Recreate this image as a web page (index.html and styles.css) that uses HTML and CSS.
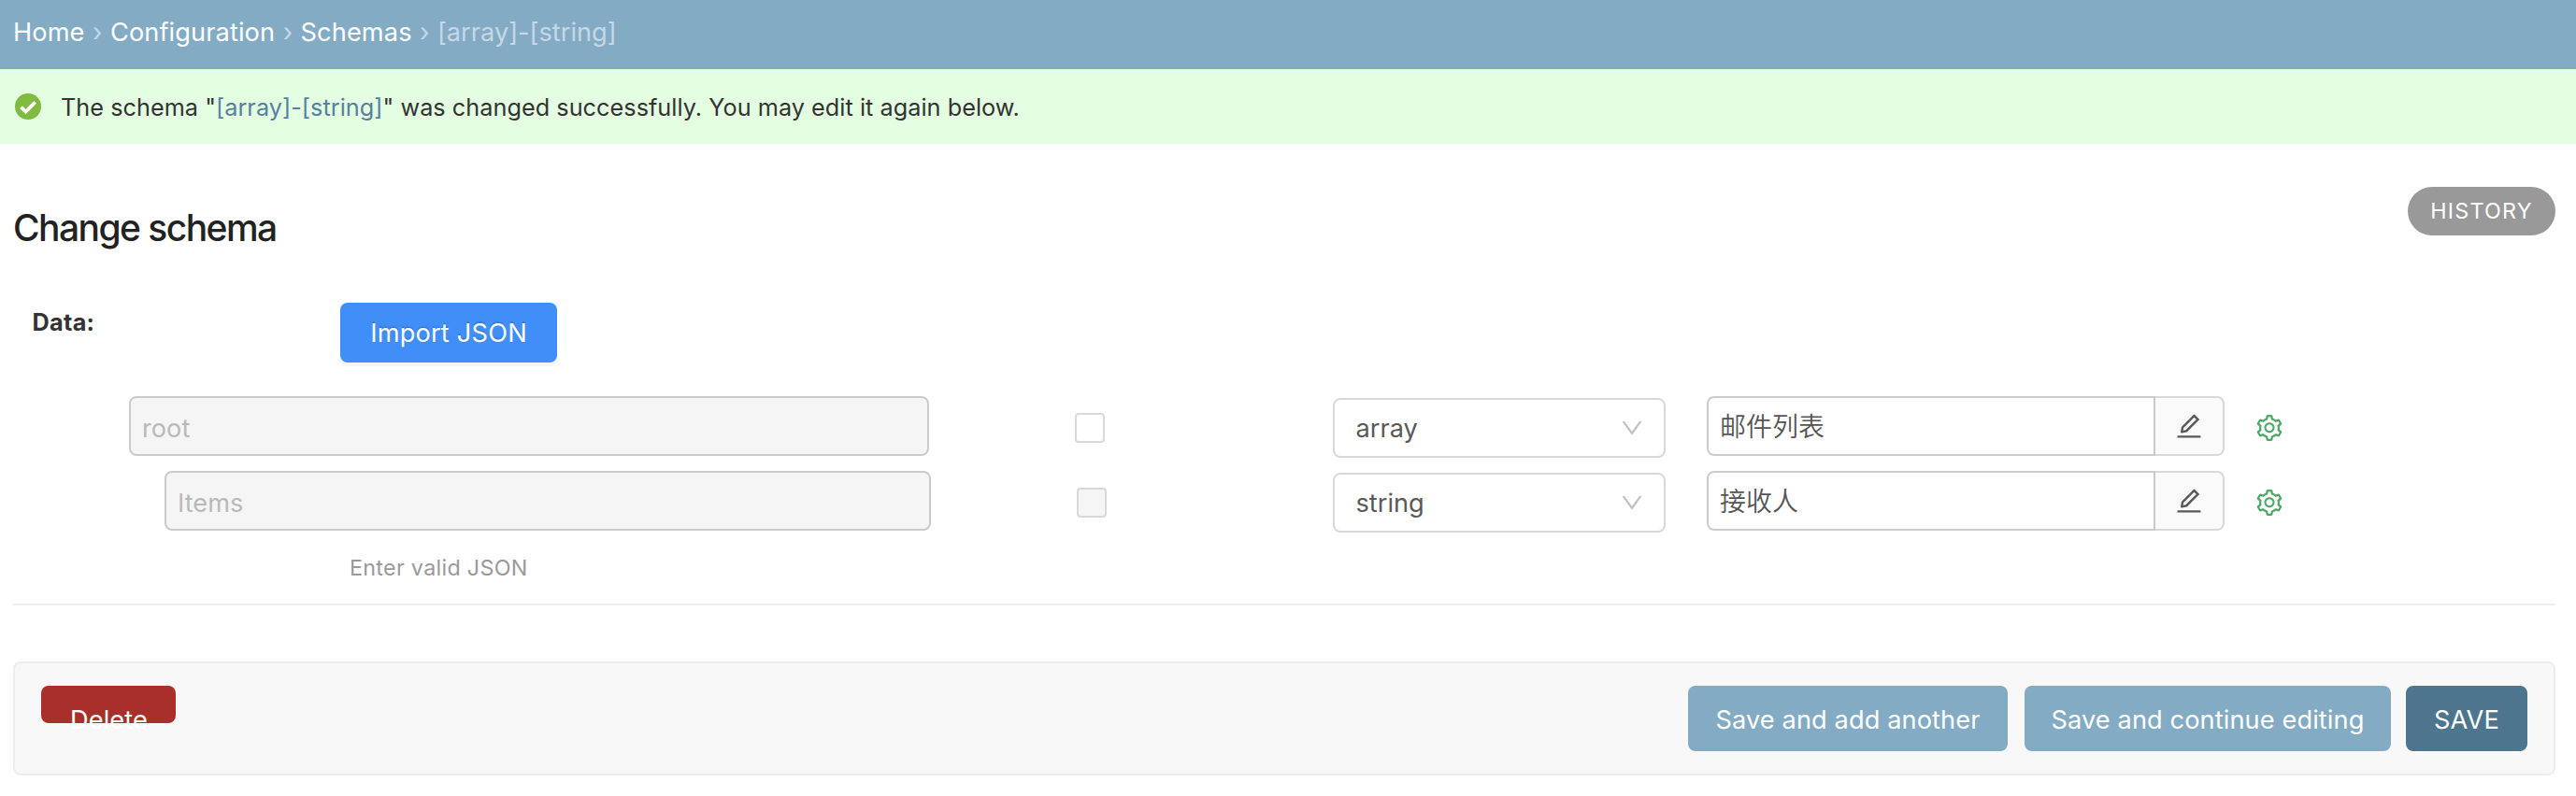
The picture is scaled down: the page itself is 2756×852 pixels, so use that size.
FILE: index.html
```html
<!DOCTYPE html>
<html lang="en">
<head>
<meta charset="utf-8">
<title>Change schema</title>
<link rel="stylesheet" href="styles.css">
</head>
<body>
<svg class="sprite" width="0" height="0">
  <symbol id="down" viewBox="0 0 1024 1024"><path d="M884 256h-75c-5.1 0-9.9 2.5-12.9 6.6L512 654.2 227.9 262.6c-3-4.1-7.8-6.6-12.9-6.6h-75c-6.5 0-10.3 7.4-6.5 12.7l352.6 486.1c12.8 17.6 39 17.6 51.7 0l352.6-486.1c3.9-5.3.1-12.7-6.4-12.7z"/></symbol>
  <symbol id="edit" viewBox="0 0 1024 1024"><path d="M257.7 752c2 0 4-.2 6-.5L431.9 722c2-.4 3.9-1.3 5.3-2.8l423.9-423.9a9.96 9.96 0 0 0 0-14.1L694.9 114.9c-1.9-1.9-4.4-2.9-7.1-2.9s-5.2 1-7.1 2.9L256.8 538.8c-1.5 1.5-2.4 3.3-2.8 5.3l-29.5 168.2a33.5 33.5 0 0 0 9.4 29.8c6.6 6.4 14.9 9.9 23.8 9.9zm67.4-174.4L687.8 215l73.3 73.3-362.7 362.6-88.9 15.7 15.6-89zM880 836H144c-17.7 0-32 14.3-32 32v36c0 4.4 3.6 8 8 8h784c4.4 0 8-3.6 8-8v-36c0-17.7-14.3-32-32-32z"/></symbol>
  <symbol id="setting" viewBox="0 0 1024 1024"><path d="M924.8 625.7l-65.5-56c3.1-19 4.7-38.4 4.7-57.8s-1.6-38.8-4.7-57.8l65.5-56a32.03 32.03 0 0 0 9.3-35.2l-.9-2.6a443.74 443.74 0 0 0-79.7-137.9l-1.8-2.1a32.12 32.12 0 0 0-35.1-9.5l-81.3 28.9c-30-24.6-63.5-44-99.7-57.6l-15.7-85a32.05 32.05 0 0 0-25.8-25.7l-2.7-.5c-52.1-9.4-106.9-9.4-159 0l-2.7.5a32.05 32.05 0 0 0-25.8 25.7l-15.8 85.4a351.86 351.86 0 0 0-99 57.4l-81.9-29.1a32 32 0 0 0-35.1 9.5l-1.8 2.1a446.02 446.02 0 0 0-79.7 137.9l-.9 2.6c-4.5 12.5-.8 26.5 9.3 35.2l66.3 56.6c-3.1 18.8-4.6 38-4.6 57.1 0 19.2 1.5 38.4 4.6 57.1L99 625.5a32.03 32.03 0 0 0-9.3 35.2l.9 2.6c18.1 50.4 44.9 96.9 79.7 137.9l1.8 2.1a32.12 32.12 0 0 0 35.1 9.5l81.9-29.1c29.8 24.5 63.1 43.9 99 57.4l15.8 85.4a32.05 32.05 0 0 0 25.8 25.7l2.7.5a449.4 449.4 0 0 0 159 0l2.7-.5a32.05 32.05 0 0 0 25.8-25.7l15.7-85a350 350 0 0 0 99.7-57.6l81.3 28.9a32 32 0 0 0 35.1-9.5l1.8-2.1c34.8-41.1 61.6-87.5 79.7-137.9l.9-2.6c4.5-12.3.8-26.3-9.3-35zM788.3 465.9c2.5 15.1 3.8 30.6 3.8 46.1s-1.3 31-3.8 46.1l-6.6 40.1 74.7 63.9a370.03 370.03 0 0 1-42.6 73.6L721 702.8l-31.4 25.8c-23.9 19.6-50.5 35-79.3 45.8l-38.1 14.3-17.9 97a377.5 377.5 0 0 1-85 0l-17.9-97.2-37.8-14.5c-28.5-10.8-55-26.2-78.7-45.7l-31.4-25.9-93.4 33.2c-17-22.9-31.2-47.6-42.6-73.6l75.5-64.5-6.5-40c-2.4-14.9-3.7-30.3-3.7-45.5 0-15.3 1.2-30.6 3.7-45.5l6.5-40-75.5-64.5c11.3-26.1 25.6-50.7 42.6-73.6l93.4 33.2 31.4-25.9c23.7-19.5 50.2-34.9 78.7-45.7l37.9-14.3 17.9-97.2c28.1-3.2 56.8-3.2 85 0l17.9 97 38.1 14.3c28.7 10.8 55.4 26.2 79.3 45.8l31.4 25.8 92.8-32.9c17 22.9 31.2 47.6 42.6 73.6L781.8 426l6.5 39.9zM512 326c-97.2 0-176 78.8-176 176s78.8 176 176 176 176-78.8 176-176-78.8-176-176-176zm79.2 255.2A111.6 111.6 0 0 1 512 614c-29.9 0-58-11.7-79.2-32.8A111.6 111.6 0 0 1 400 502c0-29.9 11.7-58 32.8-79.2C454 401.6 482.1 390 512 390c29.9 0 58 11.6 79.2 32.8A111.6 111.6 0 0 1 624 502c0 29.9-11.7 58-32.8 79.2z"/></symbol>
</svg>
<nav class="breadcrumbs"><a>Home</a> › <a>Configuration</a> › <a>Schemas</a> › <span>[array]-[string]</span></nav>
<div class="message">
  <svg class="check" viewBox="0 0 28 28"><circle cx="14" cy="14" r="14"/><path d="M6.5 14.7l5 4.9L21.6 9.4"/></svg>
  <span class="message-text">The schema "<a>[array]-[string]</a>" was changed successfully. You may edit it again below.</span>
</div>
<main class="content">
  <div class="title-row">
    <h1>Change schema</h1>
    <a class="history">HISTORY</a>
  </div>
  <section class="data">
    <div class="data-head">
      <label class="label">Data:</label>
      <button class="import">Import JSON</button>
    </div>
    <div class="row">
      <div class="field">root</div>
      <span class="checkbox"></span>
      <div class="select"><span>array</span><svg class="i-down"><use href="#down"/></svg></div>
      <div class="group"><div class="value">邮件列表</div><div class="addon"><svg class="i-edit"><use href="#edit"/></svg></div></div>
      <svg class="i-set"><use href="#setting"/></svg>
    </div>
    <div class="row child">
      <div class="field">Items</div>
      <span class="checkbox disabled"></span>
      <div class="select"><span>string</span><svg class="i-down"><use href="#down"/></svg></div>
      <div class="group"><div class="value">接收人</div><div class="addon"><svg class="i-edit"><use href="#edit"/></svg></div></div>
      <svg class="i-set"><use href="#setting"/></svg>
    </div>
    <p class="help">Enter valid JSON</p>
  </section>
  <div class="submit-row">
    <a class="delete">Delete</a>
    <button class="btn another">Save and add another</button>
    <button class="btn continue">Save and continue editing</button>
    <button class="btn save">SAVE</button>
  </div>
</main>
</body>
</html>
```
FILE: styles.css
```css
* { box-sizing: border-box; }
body { margin: 0; background: #fff; color: #333; font-family: Inter, "Noto Sans CJK SC", sans-serif; font-size: 27.2px; }
button { border: 0; padding: 0; font: inherit; color: #fff; letter-spacing: inherit; }
.sprite { display: block; }
.breadcrumbs { height: 74px; padding: 18px 14px 0; line-height: 34px; background: #84abc4; color: #c4d8e5; white-space: nowrap; word-spacing: .8px; }
.breadcrumbs a { color: #fff; letter-spacing: .1px; }
.message { display: flex; align-items: center; height: 80px; padding: 0 16px; background: #e3fee0; font-size: 25.25px; }
.message a { color: #5780a0; }
.message-text { margin-left: 21px; padding-top: 2px; white-space: nowrap; letter-spacing: .03px; }
.check { width: 28px; height: 28px; fill: #7fba41; }
.check path { fill: none; stroke: #fff; stroke-width: 3.8; }
.content { padding: 46px 22px 0 14px; }
.title-row { display: flex; justify-content: space-between; height: 124px; }
h1 { margin: 19px 0 0; font-size: 39px; line-height: 50px; font-weight: 500; color: #222; letter-spacing: -1.55px; }
.history { width: 158px; height: 52px; line-height: 52px; border-radius: 26px; background: #999; color: #fff; font-size: 23.3px; text-align: center; letter-spacing: 1.2px; }
.data { height: 324px; border-bottom: 2px solid #eee; }
.data-head { display: flex; height: 100px; }
.label { width: 350px; padding: 5px 0 0 20.5px; font-size: 25.25px; line-height: 32px; font-weight: 700; letter-spacing: .3px; }
.import { width: 232px; height: 64px; padding-top: 1px; border-radius: 8px; background: #408ef7; box-shadow: 0 4px 0 #f5f5f5; text-shadow: 0 -2px 0 rgba(0, 0, 0, .12); letter-spacing: .2px; }
.row { display: flex; height: 64px; margin: 0 0 16px 124px; }
.row.child { margin-left: 162px; }
.field { width: 856px; border: 2px solid #cbcbcb; border-radius: 8px; background: #f5f5f5; color: #b9b9b9; padding: 3px 0 0 12px; line-height: 60px; }
.child .field { width: 820px; }
.checkbox { width: 32px; height: 32px; margin: 18px 244px 0 156px; border: 2px solid #d9d9d9; border-radius: 4px; }
.checkbox.disabled { margin-right: 242px; background: #f5f5f5; }
.select { display: flex; justify-content: space-between; align-items: center; width: 356px; height: 64px; margin: 2px 44px 0 0; padding: 0 20px 0 22.5px; border: 2px solid #d9d9d9; border-radius: 8px; color: #595959; }
.i-down { width: 28px; height: 28px; fill: #bfbfbf; }
.group { display: flex; width: 554px; }
.value { width: 480px; border: 2px solid #cbcbcb; border-radius: 8px 0 0 8px; padding-left: 12px; line-height: 58px; color: #555; font-family: "Noto Sans CJK SC", sans-serif; font-size: 28px; font-weight: 350; }
.addon { width: 74px; border: 2px solid #d9d9d9; border-left: 0; border-radius: 0 8px 8px 0; background: #fafafa; padding: 13.5px 0 0 20px; }
.i-edit { display: block; width: 32px; height: 32px; fill: #595959; }
.i-set { width: 32px; height: 32px; margin: 18px 0 0 32px; fill: #4aa864; }
.help { margin: 25px 0 0 360px; font-size: 23.3px; line-height: 30px; color: #999; letter-spacing: .3px; }
.submit-row { display: flex; height: 122px; margin-top: 60px; padding: 24px 28px; border: 2px solid #ededed; border-radius: 8px; background: #f8f8f8; line-height: 74px; letter-spacing: .1px; }
.delete { width: 144px; height: 40px; margin-right: auto; border-radius: 8px; background: #a9302a; color: #fff; text-align: center; padding-left: 1px; }
.btn { height: 70px; border-radius: 8px; background: #84abc4; }
.another { width: 342px; margin-right: 18px; }
.continue { width: 392px; margin-right: 16px; }
.save { width: 130px; background: #4d758e; }
```
